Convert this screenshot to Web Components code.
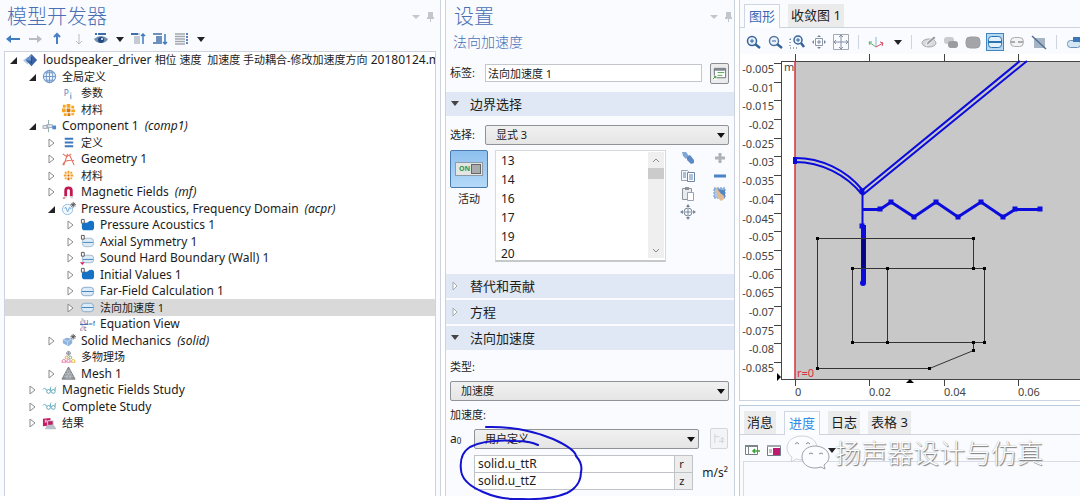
<!DOCTYPE html>
<html lang="zh-CN">
<head>
<meta charset="utf-8">
<title>模型开发器</title>
<style>
  body {
    margin: 0;
    background: #fff;
    color: #1c1c1c;
    font: 12px/16px "Noto Sans", "Noto Sans CJK SC", sans-serif;
    --panel: #f9fbff;
    --edge: #ccd3de;
    --title: #4a6fb5;
  }
</style>
</head>
<body>
<model-app></model-app>

<script>
// 16x16 icon drawings, keyed by name
const ICONS = {
  back: '<path d="M1 8l5-4v3h9v2H6v3z" fill="#3f7cc0"/>',
  forward: '<path d="M15 8l-5-4v3H2v2h8v3z" fill="#b9bcc2"/>',
  up: '<path d="M8 3v10M5 6l3-3 3 3" fill="none" stroke="#4a7fc4" stroke-width="2"/>',
  down: '<path d="M8 3v10M5 10l3 3 3-3" fill="none" stroke="#b9bcc2"/>',
  eye: '<path d="M2 3h2m1 0h8" stroke="#3b6ea8" stroke-width="2"/><path d="M1 8q7-6 14 0-2 4-7 4T1 8z" fill="#6e8db2"/><circle cx="8" cy="9" r="3" fill="#23497c"/><circle cx="9" cy="8" r="1" fill="#fff"/>',
  collapse: '<path d="M1 3h9M4 6h6M4 8h6M4 10h6M4 12h6" stroke="#8d99aa"/><path d="M1 3h7" stroke="#3f6ea8" stroke-width="2"/><path d="M13 13V3M11 5l2-2 2 2" fill="none" stroke="#3f7cc0" stroke-width="1.5"/>',
  expand: '<path d="M1 3h9M4 6h6M4 8h6M4 10h6M1 12h9" stroke="#3f6ea8" stroke-width="1.5"/><path d="M13 3v10M11 11l2 2 2-2" fill="none" stroke="#3f7cc0" stroke-width="1.5"/>',
  columns: '<path d="M1 3h10M1 5.500h10M1 8h10M1 10.500h10M1 13h10" stroke="#a3a8b0" stroke-width="1.500"/><path d="M13 2v12" stroke="#5b84bb" stroke-width="2" stroke-dasharray="2 1"/>',
  root: '<path d="M0 8l5-4 3 4-3 4z" fill="#a8c4e6"/><path d="M9 1l6 6.500L9 14 3 7.500z" fill="#3b62a5"/><path d="M9 1L3 7.500l6 1z" fill="#6d94cd"/><path d="M9 4v7" stroke="#244a89"/>',
  globe: '<circle cx="8" cy="8" r="6.500" fill="#eaf2fc" stroke="#5681bb"/><path d="M8 1.500v13M1.500 8h13M3 4h10M3 12h10" stroke="#6e96ca" fill="none"/><ellipse cx="8" cy="8" rx="3.500" ry="6.500" fill="none" stroke="#6e96ca"/>',
  param: '<text x="3" y="11" font-size="9" fill="#5283c2" font-family="Noto Sans">P</text><path d="M10.500 9v5M10.500 7v1" stroke="#5283c2"/>',
  material: '<g fill="#f5a623"><path d="M6 2h4v4H6zM2 3h3v3H2zM1 7h4v4H1zM11 4h3v3h-3zM11 8h4v3h-4zM3 12h3v3H3zM11 12h3v2h-3z"/></g><path d="M6 7h4v4H6zM7 12h3v3H7z" fill="#d9780f"/>',
  materialSmall: '<g fill="#f2a02a"><path d="M7 3h2v3H7zM4 4h2v2H4zM3 7h3v2H3zM10 4h2v2h-2zM10 7h3v2h-3zM4 10h2v2H4zM10 10h2v2h-2z"/></g><path d="M7 7h2v2H7zM7 10h2v3H7z" fill="#d9620f"/>',
  component: '<path d="M7 1v13" stroke="#8aa" /><path d="M1 7h5v3H1zM5 6h6v3H5z" fill="#e4eaf0" stroke="#a0acba"/><path d="M11 7h4v4h-4z" fill="#4f88cc"/>',
  lines: '<path d="M4 4h9M4 8h9M4 12h9" stroke="#3d78bd" stroke-width="2"/>',
  geometry: '<path d="M2 2l4 3 5-3M7 2L3 14M9 3l5 11M2 14q1-6 12-5" fill="none" stroke="#e4705f" stroke-width="1.200"/>',
  magnet: '<path d="M5 12V6q0-3 3-3t3 3v6" fill="none" stroke="#c2184f" stroke-width="3"/><path d="M3 12h3v2H3zM10 12h3v2h-3z" fill="#cfd4da"/><path d="M2 14h2" stroke="#c22"/>',
  acoustics: '<circle cx="7" cy="9" r="5.500" fill="#f2f8fe" stroke="#93bce0"/><path d="M4 8q1-3 2 1t2 1 1-3 2 1" fill="none" stroke="#5e9bd0"/><path d="M13 1v6M10 4h6M11 2l4 4M15 2l-4 4" stroke="#555"/>',
  domain: '<path d="M2 7q0-2 2-2h3q1 0 2 -1 1-1 3-1 3 0 3 3v4q0 3-3 3H5q-3 0-3-3z" fill="#1672c4"/><path d="M1.500 1.500h3v4h-3z" fill="#fff" stroke="#555"/>',
  symmetry: '<rect x="2.500" y="4.500" width="12" height="9" rx="3.500" fill="#dcebf5" stroke="#a2b9ca"/><path d="M3 9h11" stroke="#4285bd"/><path d="M1.500 1.500h3v4h-3z" fill="#fff" stroke="#555"/>',
  wall: '<rect x="2.500" y="4.500" width="12" height="8" rx="3" fill="#dcebf5" stroke="#a2b9ca"/><path d="M3 9h11" stroke="#4285bd"/><path d="M1.500 1.500h3v4h-3z" fill="#fff" stroke="#555"/><path d="M0 12h5l-2.500 3z" fill="#d81e5b"/>',
  boundary: '<rect x="1.500" y="3.500" width="13" height="9" rx="3.500" fill="#dcebf8" stroke="#86a7c3"/><path d="M2 8h12" stroke="#3d80bd"/>',
  equation: '<g fill="#4068a8" font-size="8" font-family="Noto Sans"><text x="0" y="7">∂u</text><text x="0" y="15">∂t</text><text x="9" y="10">=f</text></g><path d="M0 8h9" stroke="#4068a8"/>',
  solid: '<path d="M2 7l4-2 6 1v5l-4 3-4-2-2-1z" fill="#8eb3dd"/><path d="M2 7l5 2 5-3M7 9v4" fill="none" stroke="#c9dcf2"/><path d="M13 1v6M10 4h6M11 2l4 4M15 2l-4 4" stroke="#555"/>',
  multi: '<circle cx="8" cy="3.500" r="2" fill="none" stroke="#8e959e"/><path d="M8 1v5M5.500 3.500h5" stroke="#8e959e"/><circle cx="6" cy="8" r="1.500" fill="none" stroke="#e59646"/><circle cx="10" cy="8" r="1.500" fill="none" stroke="#68b36d"/><path d="M1 13q0-3 2-3t2 3zM6 13q0-3 2-3t2 3z" fill="none" stroke="#e576a8"/><path d="M11 13q0-3 2-3t2 3z" fill="none" stroke="#e3b928"/>',
  mesh: '<path d="M8 1l7 13H1z" fill="#93999f" stroke="#777d84"/><path d="M6 5h4M4.500 8h7M3 11h10M6 5l5 9M10 5l-5 9M4.500 8l3 6M11.500 8l-3 6" stroke="#c4c8cc" stroke-width=".600"/>',
  study: '<path d="M1 7q2-3 4 1" fill="none" stroke="#59a5b5"/><circle cx="7" cy="9" r="2" fill="none" stroke="#59a5b5"/><circle cx="12" cy="9" r="2" fill="none" stroke="#59a5b5"/><path d="M9 8V5l1-1M14 8V5l1-1" stroke="#59a5b5" fill="none"/>',
  results: '<path d="M1 3l8-1v8l-8 1z" fill="#c41e67"/><path d="M3 4h2v3H3z" fill="#f2bfd4"/><path d="M6 5h6v5H6z" fill="#b52563" stroke="#e2dfe4"/><path d="M5 10l7-1 3 4v1H3z" fill="#b9c0ca"/>',
  report: '<path d="M2.500 2.500h12v10h-12z" fill="#fff" stroke="#666e77"/><path d="M2 3h13v2H2z" fill="#7b8590"/><path d="M6 7h7M6 10h5" stroke="#4da34a"/><path d="M0 10h5v5H0z" fill="#f4f8f1"/><path d="M1 14l3-3M2 11h2v2" stroke="#34913a" fill="none"/>',
  brush: '<path d="M2 2h4l3 4-3 3-3-3z" fill="#7fa7d8"/><path d="M7 7l3-2 4 5v3l-3 1-4-4z" fill="#5c8ac4"/>',
  copy: '<path d="M1.500 2.500h6l1 1v9h-7z" fill="#f5f8fc" stroke="#98a2b2"/><path d="M7.500 4.500h7v9h-7z" fill="#fff" stroke="#6d87ab"/><path d="M3 5h3M3 7h3M3 9h3M9 7h4M9 9h4M9 11h4" stroke="#5b83bd"/>',
  paste: '<path d="M2.500 2.500h9v11h-9z" fill="#e9ecef" stroke="#8c939c"/><path d="M5 1h4v3H5z" fill="#8c939c"/><path d="M7.500 6.500h6v8h-6z" fill="#fff" stroke="#98a2b2"/>',
  zoomsel: '<circle cx="8" cy="8" r="4" fill="none" stroke="#7a8797"/><path d="M8 5v6M5 8h6" stroke="#7a8797"/><path d="M8 0l2 3H6zM8 16l2-3H6zM0 8l3-2v4zM16 8l-3-2v4z" fill="#76859a"/>',
  plus: '<path d="M8 3v10M3 8h10" stroke="#aeb3ba" stroke-width="3"/>',
  minus: '<path d="M2 8h12" stroke="#4a82c2" stroke-width="3"/>',
  clear: '<path d="M2 2h11v10H2z" fill="#a9c7eb" stroke="#6993c9" stroke-dasharray="2 1"/><path d="M4 3l9 1v8" fill="#5486c2"/><path d="M4 1l5 7q4 1 3 5l-3 2-4-4z" fill="#e2bb92"/>',
  zoomin: '<circle cx="7" cy="7" r="4.500" fill="#eaf3fd" stroke="#34639b" stroke-width="1.500"/><path d="M10 10l5 4" stroke="#34639b" stroke-width="2.500"/><path d="M7 5v4M5 7h4" stroke="#34639b"/>',
  zoomout: '<circle cx="7" cy="7" r="4.500" fill="#eaf3fd" stroke="#55779f" stroke-width="1.500"/><path d="M10 10l5 4" stroke="#34639b" stroke-width="2.500"/><path d="M5 7h4" stroke="#34639b"/>',
  zoombox: '<path d="M1 5v9h7M1 5h3" fill="none" stroke="#4d6584" stroke-dasharray="1 2"/><circle cx="9" cy="6" r="4" fill="#eaf3fd" stroke="#34639b" stroke-width="1.500"/><path d="M12 9l3 4" stroke="#34639b" stroke-width="2.500"/><path d="M9 4v4M7 6h4" stroke="#34639b"/>',
  extents: '<path d="M4.500 4.500h7v7h-7z" fill="none" stroke="#8c97a5"/><path d="M8 6v4M6 8h4" stroke="#7a8797"/><path d="M8 1l2 2H6zM8 15l2-2H6zM1 8l2-2v4zM15 8l-2-2v4z" fill="#76859a"/>',
  fit: '<path d="M.500 .500h15v15H.500z" fill="none" stroke="#a3a9b1"/><path d="M8 1v14M1 8h14M6 3l2-2 2 2M6 13l2 2 2-2M3 6L1 8l2 2M13 6l2 2-2 2" fill="none" stroke="#8390a2"/>',
  axes: '<path d="M8 13V3" stroke="#8fb0e0"/><path d="M8 13L1 8M2 11L1 8l3 0" fill="none" stroke="#5cb36e"/><path d="M8 13l7-4M12 8l3 1-1 3" fill="none" stroke="#d8505f"/>',
  edit: '<ellipse cx="8" cy="9" rx="7" ry="4" fill="#d8dadc" stroke="#a6a9ac"/><path d="M5 12l1-4 7-6 2 2-7 6z" fill="#9b9ea1" stroke="#f2f2f2"/>',
  shapes: '<rect x="1" y="3" width="10" height="7" rx="3" fill="#c9cbcd"/><rect x="5" y="7" width="10" height="7" rx="3" fill="#9a9da0"/>',
  blob: '<rect x="1" y="3" width="14" height="11" rx="4" fill="#a3a5a8" stroke="#9c9fa2"/>',
  edges: '<rect x="1.500" y="2.500" width="13" height="11" rx="3" fill="#e5f1fa" stroke="#2773b4"/><path d="M1 8h14" stroke="#2773b4" stroke-width="2"/>',
  points: '<rect x="1.500" y="3.500" width="13" height="9" rx="4" fill="#f3f3f4" stroke="#aaadb0"/><path d="M1 8h14" stroke="#aaadb0" stroke-width="2" stroke-dasharray="5 3"/>',
  nosel: '<path d="M3 4h11v10H3z" fill="#a6b4c6"/><path d="M1 2l14 13" stroke="#546f92" stroke-width="1.500"/>',
  view: '<rect x="1.500" y="6.500" width="13" height="7" rx="3" fill="#d4e5f4" stroke="#6e93b8"/><path d="M7 8V3h8v5" fill="#3a78b8"/>',
  export: '<path d="M1.500 3.500h12v9h-12z" fill="#fff" stroke="#737a82"/><path d="M1 3h13v2H1zM4 4h1v9H4z" fill="#7c848c"/><path d="M16 9h-7M11 7L9 9l2 2" fill="none" stroke="#3fa23d" stroke-width="1.500"/>',
  stop: '<path d="M1.500 3.500h13v10h-13z" fill="#fff" stroke="#737a82"/><path d="M1 3h14v2H1z" fill="#a2a8af"/><path d="M7 6h7v7H7z" fill="#c01770"/><path d="M3 8h3M3 10h3" stroke="#888"/>',
  table: '<path d="M3 3v10M3 6h5M11 13V7M9 9l2-2 2 2M7 11h6" fill="none" stroke="#cfd2d6"/>',
  caret: '<path d="M4 6h8l-4 5z" fill="#222"/>',
  menu: '<path d="M4 7h8l-4 4z" fill="#c3c6cc"/>',
  pin: '<path d="M6 4h5v5h1v2H9v3H8v-3H5V9h1z" fill="#c3c6cc"/>'
};

class UiIcon extends HTMLElement {
  connectedCallback() {
    this.attachShadow({ mode: 'open' }).innerHTML = `
      <style>
        :host { display: block; flex: none; width: 16px; height: 16px; }
        svg { display: block; width: 100%; height: 100%; }
      </style>
      <svg viewBox="0 0 16 16" aria-hidden="true">${ICONS[this.getAttribute('name')] || ''}</svg>
    `;
  }
}

class ToolButton extends HTMLElement {
  connectedCallback() {
    this.attachShadow({ mode: 'open' }).innerHTML = `
      <style>
        :host { display: block; flex: none; }
        button { display: block; padding: 0; border: 0; background: none; }
        :host([caret]) button { width: 12px; overflow: hidden; }
        :host([active]) button {
          outline: 1px solid #4386bf;
          background: #b7d8f3;
        }
      </style>
      <button type="button" aria-label="${this.getAttribute('icon')}">
        <ui-icon name="${this.getAttribute('icon')}"></ui-icon>
      </button>
    `;
  }
}

class PanelTitle extends HTMLElement {
  connectedCallback() {
    this.attachShadow({ mode: 'open' }).innerHTML = `
      <style>
        :host { display: flex; align-items: center; height: 30px; }
        h1 {
          flex: 1;
          margin: 0;
          font: 300 20px/30px "Noto Sans CJK SC", sans-serif;
          color: var(--title);
        }
        tool-button { margin-right: -2px; }
      </style>
      <h1><slot></slot></h1>
      <tool-button icon="menu"></tool-button>
      <tool-button icon="pin"></tool-button>
    `;
  }
}

class TreeRow extends HTMLElement {
  connectedCallback() {
    const level = Number(this.getAttribute('level'));
    const state = this.getAttribute('state');
    const arrows = {
      open: '<path d="M9 2v7H2z" fill="#222"/>',
      closed: '<path d="M3 1l5 4-5 4z" fill="#fff" stroke="#8a8a8a"/>'
    };
    this.attachShadow({ mode: 'open' }).innerHTML = `
      <style>
        :host {
          display: flex;
          align-items: center;
          height: 16px;
          padding-left: ${3 + level * 19}px;
        }
        :host(:nth-child(even)) { height: 17px; }
        :host([selected]) { background: #d9d9d9; }
        svg { flex: none; width: 10px; height: 10px; margin-right: 5px; }
        ui-icon { width: 15px; height: 15px; margin-right: 5px; }
        span { white-space: pre; }
        ::slotted(b) { font-weight: 400; font-size: 11px; }
        ::slotted(i) { margin-left: 6px; }
      </style>
      <svg viewBox="0 0 10 10" aria-hidden="true">${arrows[state] || ''}</svg>
      <ui-icon name="${this.getAttribute('icon')}"></ui-icon>
      <span><slot></slot></span>
    `;
  }
}

class ModelBuilder extends HTMLElement {
  connectedCallback() {
    this.attachShadow({ mode: 'open' }).innerHTML = `
      <style>
        :host {
          display: flex;
          flex-direction: column;
          padding: 1px 4px 0 4px;
          background: var(--panel);
          border-right: 1px solid var(--edge);
        }
        panel-title { padding-left: 3px; }
        .bar { display: flex; gap: 6px; height: 20px; padding: 0 1px; }
        .bar .pair { display: flex; gap: 3px; }
        .tree {
          flex: 1;
          border: 1px solid var(--edge);
          border-bottom: 0;
          background: #fff;
          overflow: hidden;
        }
      </style>
      <panel-title>模型开发器</panel-title>
      <div class="bar">
        <tool-button icon="back"></tool-button>
        <tool-button icon="forward"></tool-button>
        <tool-button icon="up"></tool-button>
        <tool-button icon="down"></tool-button>
        <span class="pair"><tool-button icon="eye"></tool-button><tool-button caret icon="caret"></tool-button></span>
        <tool-button icon="collapse"></tool-button>
        <tool-button icon="expand"></tool-button>
        <span class="pair"><tool-button icon="columns"></tool-button><tool-button caret icon="caret"></tool-button></span>
      </div>
      <div class="tree">
        <tree-row level="0" state="open" icon="root">loudspeaker_driver <b>相位 速度  加速度 手动耦合-修改加速度方向</b> 20180124.mph</tree-row>
        <tree-row level="1" state="open" icon="globe"><b>全局定义</b></tree-row>
        <tree-row level="2" icon="param"><b>参数</b></tree-row>
        <tree-row level="2" icon="material"><b>材料</b></tree-row>
        <tree-row level="1" state="open" icon="component">Component 1<i>(comp1)</i></tree-row>
        <tree-row level="2" state="closed" icon="lines"><b>定义</b></tree-row>
        <tree-row level="2" state="closed" icon="geometry">Geometry 1</tree-row>
        <tree-row level="2" state="closed" icon="materialSmall"><b>材料</b></tree-row>
        <tree-row level="2" state="closed" icon="magnet">Magnetic Fields<i>(mf)</i></tree-row>
        <tree-row level="2" state="open" icon="acoustics">Pressure Acoustics, Frequency Domain<i>(acpr)</i></tree-row>
        <tree-row level="3" state="closed" icon="domain">Pressure Acoustics 1</tree-row>
        <tree-row level="3" state="closed" icon="symmetry">Axial Symmetry 1</tree-row>
        <tree-row level="3" state="closed" icon="wall">Sound Hard Boundary (Wall) 1</tree-row>
        <tree-row level="3" state="closed" icon="domain">Initial Values 1</tree-row>
        <tree-row level="3" state="closed" icon="boundary">Far-Field Calculation 1</tree-row>
        <tree-row level="3" state="closed" icon="boundary" selected><b>法向加速度 1</b></tree-row>
        <tree-row level="3" icon="equation">Equation View</tree-row>
        <tree-row level="2" state="closed" icon="solid">Solid Mechanics<i>(solid)</i></tree-row>
        <tree-row level="2" icon="multi"><b>多物理场</b></tree-row>
        <tree-row level="2" state="closed" icon="mesh">Mesh 1</tree-row>
        <tree-row level="1" state="closed" icon="study">Magnetic Fields Study</tree-row>
        <tree-row level="1" state="closed" icon="study">Complete Study</tree-row>
        <tree-row level="1" state="closed" icon="results"><b>结果</b></tree-row>
      </div>
    `;
  }
}

class FormSection extends HTMLElement {
  connectedCallback() {
    const open = this.hasAttribute('open');
    this.attachShadow({ mode: 'open' }).innerHTML = `
      <style>
        :host { display: block; }
        :host(:not(:last-of-type)) { margin-bottom: 2px; }
        h2 {
          display: flex;
          align-items: center;
          height: 24px;
          margin: 0;
          padding-left: 4px;
          background: #dfe8f4;
          font: 400 13px/24px "Noto Sans CJK SC", sans-serif;
        }
        svg { width: 10px; height: 10px; margin-right: 10px; }
      </style>
      <h2>
        <svg viewBox="0 0 10 10" aria-hidden="true">${open
          ? '<path d="M1 2h8L5 7z" fill="#444"/>'
          : '<path d="M3 1l4 4-4 4z" fill="#fff" stroke="#a5abb3"/>'}</svg>
        ${this.getAttribute('heading')}
      </h2>
      <slot></slot>
    `;
  }
}

class SettingsPanel extends HTMLElement {
  connectedCallback() {
    this.attachShadow({ mode: 'open' }).innerHTML = `
      <style>
        :host {
          display: block;
          position: relative;
          margin-left: 4px;
          padding-top: 1px;
          background: var(--panel);
          border: solid var(--edge);
          border-width: 0 1px;
          font-size: 11px;
        }
        panel-title { padding-left: 8px; }
        .sub {
          height: 31px;
          padding-left: 7px;
          font: 300 14px/20px "Noto Sans CJK SC", sans-serif;
          color: var(--title);
        }
        .row { display: flex; align-items: center; gap: 8px; padding: 0 5px 0 4px; }
        .name { height: 22px; padding-bottom: 8px; }
        .name > input { flex: 1; min-width: 0; height: 18px; }
        .name label, .pick label { width: 27px; }
        label { white-space: nowrap; }
        input {
          box-sizing: border-box;
          margin: 0;
          padding: 0 2px;
          border: 1px solid #c3c6cb;
          background: #fff;
          color: inherit;
          font: inherit;
        }
        select {
          appearance: none;
          box-sizing: border-box;
          flex: 1;
          min-width: 0;
          height: 20px;
          margin: 0;
          padding: 0 10px;
          border: 1px solid #8f9298;
          border-radius: 2px;
          background: linear-gradient(#f1f1f2, #e5e5e6);
          color: inherit;
          font: inherit;
        }
        .drop { display: flex; flex: 1; min-width: 0; position: relative; }
        .drop::after {
          content: "";
          position: absolute;
          right: 4px;
          top: 8px;
          border: solid transparent;
          border-width: 5px 4px 0;
          border-top-color: #111;
        }
        .sq {
          box-sizing: border-box;
          width: 19px;
          height: 21px;
          padding: 1px;
          border: 1px solid #8a8d92;
          border-radius: 2px;
          background: #ececed;
        }
        .sq ui-icon { width: 15px; height: 15px; }
        .sq[disabled] { border-color: #d3d6db; background: #f3f4f7; }
        .pick { padding-top: 9px; }
        .body { display: flex; align-items: flex-start; padding: 5px 6px 10px 4px; }
        .onoff { width: 38px; text-align: center; line-height: 22px; }
        .onoff button {
          display: grid;
          place-items: center;
          box-sizing: border-box;
          width: 38px;
          height: 38px;
          padding: 0;
          border: 1px solid #4a7aad;
          border-radius: 2px;
          background: linear-gradient(#8dc0ee, #b5d9f8);
        }
        .switch {
          display: flex;
          align-items: center;
          justify-content: space-between;
          box-sizing: border-box;
          width: 28px;
          height: 14px;
          padding: 1px 1px 1px 3px;
          border: 1px solid #8d99a5;
          background: #e4e6e4;
          color: #2c9a4e;
          font: bold 7px/10px "Noto Sans", sans-serif;
        }
        .switch::after {
          content: "";
          box-sizing: border-box;
          width: 10px;
          height: 10px;
          border: 1px solid #666;
          background: #a9abad;
        }
        .list {
          display: flex;
          flex: 1;
          box-sizing: border-box;
          height: 112px;
          margin: 0 14px 0 7px;
          border: 1px solid #d5d8dd;
          border-bottom: 2px solid #c5c9c8;
          background: #fff;
          overflow: hidden;
        }
        ul { flex: 1; height: 109px; margin: 0; padding: 0 5px; list-style: none; font-size: 12px; line-height: 19px; }
        li:last-child { line-height: 14px; height: 14px; padding-top: 1px; }
        .scroll {
          display: flex;
          flex-direction: column;
          align-items: center;
          width: 16px;
          margin: 1px 1px 2px;
          background: #efefef;
        }
        .scroll svg { width: 8px; height: 16px; }
        .thumb { width: 100%; height: 11px; margin-bottom: auto; background: #cbcbcb; }
        .tools { display: grid; grid-template-columns: 16px 16px; gap: 2px 16px; }
        .tools > :last-child { grid-column: 1; }
        .cap { display: block; padding-left: 4px; line-height: 16px; }
        .type { padding-top: 9px; padding-bottom: 6px; }
        .acc { padding-top: 6px; padding-bottom: 5px; }
        .a0 { width: 17px; font-size: 12px; }
        .a0 sub { font-size: 8px; line-height: 0; vertical-align: -1px; }
        .user { padding-right: 6px; gap: 7px; }
        .user .sq { width: 18px; margin-left: 4px; }
        .vec { gap: 9px; padding: 6px 6px 5px 28px; }
        .vec > span { font-size: 12px; }
        table { flex: 1; border-collapse: collapse; border: 1px solid #bfc2c7; background: #fff; font-size: 12px; }
        td, th { padding: 0; border: 1px solid #bfc2c7; height: 16px; font-weight: 400; }
        th { width: 18px; padding-left: 4px; background: #ededee; text-align: left; font-size: 11px; line-height: 12px; box-sizing: border-box; }
        td { padding-left: 1px; }
        td input { display: block; width: 100%; height: 16px; border: 0; }
        /* pen mark round the two vector components */
        .pen {
          position: absolute;
          left: 10px;
          bottom: -4px;
          width: 132px;
          height: 78px;
          pointer-events: none;
        }
      </style>
      <panel-title>设置</panel-title>
      <div class="sub">法向加速度</div>
      <div class="row name">
        <label for="name">标签:</label>
        <input id="name" value="法向加速度 1">
        <button class="sq" type="button" aria-label="report"><ui-icon name="report"></ui-icon></button>
      </div>
      <form-section heading="边界选择" open>
        <div class="row pick">
          <label for="sel">选择:</label>
          <span class="drop"><select id="sel"><option>显式 3</option></select></span>
        </div>
        <div class="body">
          <div class="onoff">
            <button type="button" aria-labelledby="act"><span class="switch">ON</span></button>
            <span id="act">活动</span>
          </div>
          <div class="list">
            <ul><li>13</li><li>14</li><li>16</li><li>17</li><li>19</li><li>20</li></ul>
            <div class="scroll">
              <svg viewBox="0 0 8 16"><path d="M1 10l3-3 3 3" fill="none" stroke="#888"/></svg>
              <div class="thumb"></div>
              <svg viewBox="0 0 8 16"><path d="M1 7l3 3 3-3" fill="none" stroke="#888"/></svg>
            </div>
          </div>
          <div class="tools">
            <tool-button icon="brush"></tool-button><tool-button icon="plus"></tool-button>
            <tool-button icon="copy"></tool-button><tool-button icon="minus"></tool-button>
            <tool-button icon="paste"></tool-button><tool-button icon="clear"></tool-button>
            <tool-button icon="zoomsel"></tool-button>
          </div>
        </div>
      </form-section>
      <form-section heading="替代和贡献"></form-section>
      <form-section heading="方程"></form-section>
      <form-section heading="法向加速度" open>
        <label class="cap type" for="type">类型:</label>
        <div class="row"><span class="drop"><select id="type"><option>加速度</option></select></span></div>
        <label class="cap acc" for="acc">加速度:</label>
        <div class="row user">
          <span class="a0">a<sub>0</sub></span>
          <span class="drop"><select id="acc"><option>用户定义</option></select></span>
          <button class="sq" type="button" disabled aria-label="table"><ui-icon name="table"></ui-icon></button>
        </div>
        <div class="row vec">
          <table>
            <tr><td><input id="r" value="solid.u_ttR"></td><th><label for="r">r</label></th></tr>
            <tr><td><input id="z" value="solid.u_ttZ"></td><th><label for="z">z</label></th></tr>
          </table>
          <span>m/s²</span>
        </div>
      </form-section>
      <svg class="pen" viewBox="0 0 132 78" aria-hidden="true">
        <path d="M30 5C60 4 80 10 97 17Q119 27 120 34Q127 42 125 50Q125 64 111 71Q95 78 66 77Q45 78 27 70Q6 61 5 48Q3 32 14 25Q30 17 60 19Q74 19 82 23" fill="none" stroke="#1212cf" stroke-width="2" stroke-linecap="round"/>
      </svg>
    `;
  }
}

class TabButton extends HTMLElement {
  connectedCallback() {
    this.attachShadow({ mode: 'open' }).innerHTML = `
      <style>
        :host { display: block; }
        button {
          display: block;
          height: 23px;
          padding: 0 3px;
          border: 0;
          background: #ebebec;
          color: #1c1c1c;
          font: 13px/23px "Noto Sans", "Noto Sans CJK SC", sans-serif;
        }
        :host([active]) { margin-bottom: -1px; }
        :host([active]) button {
          height: 24px;
          padding: 0 4px;
          border: 1px solid #cdd6e2;
          border-bottom: 0;
          background: #fcfdff;
          color: var(--tab-color, #3e68b3);
        }
      </style>
      <button type="button"><slot></slot></button>
    `;
  }
}

// Axisymmetric geometry plot; the r axis starts 55px from the left edge
class GeometryPlot extends HTMLElement {
  connectedCallback() {
    const x0 = 55, top = 7, bottom = 325, left = 41;
    let ticks = '', labels = '';
    for (let i = 0; i < 17; i++) {
      const y = Math.round(9 + i * 18.69);
      ticks += `M${left - 7} ${y}.5h7`;
      const value = -(i + 1) * 5 / 1000;
      labels += `<text x="34" y="${y + 10}" text-anchor="end">${value}</text>`;
    }
    ['0', '0.02', '0.04', '0.06'].forEach((value, i) => {
      const x = Math.round(x0 + i * 74.3);
      ticks += `M${x}.5 0v${top}M${x}.5 ${bottom}v7`;
      labels += `<text x="${x}" y="342">${value}</text>`;
    });
    const dots = [[77, 184], [233, 184], [112, 214], [147, 214], [233, 214], [244, 214],
      [112, 288], [147, 288], [233, 288], [244, 288], [233, 296], [77, 314], [189, 314]];
    const knots = [[140, 155], [151, 148], [174, 163], [196, 148], [218, 163], [241, 148], [263, 163], [275, 155], [300, 155], [122, 137], [122, 172]];
    const square = (size) => ([x, y]) => `M${x - size / 2} ${y - size / 2}h${size}v${size}h-${size}z`;

    this.attachShadow({ mode: 'open' }).innerHTML = `
      <style>
        :host { display: block; background: #fff; border-bottom: 1px solid var(--edge); }
        svg { display: block; width: 100%; height: 346px; font-size: 11px; fill: #444; }
      </style>
      <svg role="img" aria-label="geometry">
        <rect x="${x0}" y="${top}" width="100%" height="${bottom - top}" fill="#c8c8c8"/>
        <path d="M${left}.5 ${top}V${bottom}M${left} ${top}.5H4000M${left} ${bottom}.5H4000${ticks}" stroke="#444" fill="none"/>
        <path d="M${x0} ${top}V${bottom}" stroke="#d6323c" stroke-width="1.500"/>
        ${labels}
        <text x="44" y="17">m</text>
        <text x="57" y="323" fill="#e0303c">r=0</text>
        <path d="M37 319l4 4-4 4zM166 329l4-4 4 4z" fill="#000"/>
        <g fill="none" stroke="#0b0bdc" stroke-width="2">
          <path d="M55 104A87 87 0 0 1 122.500 136L280 7M55 108A87 87 0 0 1 122.500 141L287 7M122.500 136v36"/>
          <path d="M123.500 171v57" stroke-width="5"/>
          <path d="M123.500 184v30" stroke="#050585" stroke-width="4"/>
          <path d="M122 155.500H140L151 148L174 163L196 148L218 163L241 148L263 163L275 155.500H300" stroke-width="3"/>
        </g>
        <circle cx="123" cy="229" r="3" fill="#0b0bdc"/>
        <path d="${knots.map(square(5)).join('')}M53 103h4v7h-4z" fill="#0b0bdc"/>
        <path d="M233.500 214.500V184.500H77.500V314.500H189.500L233.500 296.500V288.500M112.500 214.500H244.500V288.500H112.500zM147.500 214.500v74" fill="none" stroke="#333"/>
        <path d="${dots.map(([x, y]) => square(3)([x + .5, y + .5])).join('')}" fill="#000"/>
      </svg>
    `;
  }
}

class GraphicsPanel extends HTMLElement {
  connectedCallback() {
    const tool = (name) => `<tool-button icon="${name}"></tool-button>`;
    this.attachShadow({ mode: 'open' }).innerHTML = `
      <style>
        :host {
          display: block;
          min-width: 0;
          margin-left: 4px;
          padding-top: 4px;
          background: var(--panel);
          border-left: 1px solid var(--edge);
        }
        .tabs { display: flex; gap: 8px; padding-left: 4px; border-bottom: 1px solid var(--edge); }
        .bar { display: flex; align-items: center; gap: 6px; height: 26px; padding-left: 5px; padding-top: 1px; box-sizing: border-box; overflow: hidden; }
        .bar i { flex: none; width: 1px; height: 14px; margin: 0 3px; background: #cfd5de; }
      </style>
      <div class="tabs">
        <tab-button active>图形</tab-button>
        <tab-button>收敛图 1</tab-button>
      </div>
      <div class="bar">
        ${['zoomin', 'zoomout', 'zoombox', 'extents', 'fit'].map(tool).join('')}
        <i></i>${tool('axes')}<tool-button caret icon="caret"></tool-button><i></i>
        ${['edit', 'shapes', 'blob'].map(tool).join('')}
        <tool-button active icon="edges"></tool-button>
        ${['points', 'nosel'].map(tool).join('')}
        <i></i>${tool('view')}
      </div>
      <geometry-plot></geometry-plot>
    `;
  }
}

class MessagePanel extends HTMLElement {
  connectedCallback() {
    this.attachShadow({ mode: 'open' }).innerHTML = `
      <style>
        :host {
          display: flex;
          flex-direction: column;
          position: relative;
          min-width: 0;
          margin: 4px 0 0 4px;
          padding-top: 5px;
          background: var(--panel);
          border: solid #b9cde2;
          border-width: 1px 0 0 1px;
          --tab-color: #2f8be6;
        }
        .tabs { display: flex; gap: 8px; padding-left: 4px; border-bottom: 1px solid var(--edge); }
        .bar { display: flex; gap: 6px; height: 26px; padding: 7px 4px 0; box-sizing: border-box; }
        .bar [caret] { margin-left: 36px; }
        .log { flex: 1; margin-left: 3px; border: solid #d5dce7; border-width: 1px 0 0 1px; }
        .mark {
          display: flex;
          align-items: center;
          gap: 5px;
          position: absolute;
          left: 46px;
          top: 28px;
          color: #fff;
          font: 300 26px/36px "Noto Sans CJK SC", sans-serif;
          white-space: nowrap;
          text-shadow: 1px 1px 1px #777, 0 0 1px #999;
        }
        .mark svg { width: 44px; height: 36px; }
      </style>
      <div class="tabs">
        <tab-button>消息</tab-button>
        <tab-button active>进度</tab-button>
        <tab-button>日志</tab-button>
        <tab-button>表格 3</tab-button>
      </div>
      <div class="bar">
        <tool-button icon="export"></tool-button>
        <tool-button icon="stop"></tool-button>
        <tool-button caret icon="caret"></tool-button>
      </div>
      <div class="log"></div>
      <div class="mark">
        <svg viewBox="0 0 44 36" aria-hidden="true">
          <g fill="#fbfcff" stroke="#b0b4ba">
            <path d="M16 2C7 2 1 7 1 14c0 4 2 7 5 9l-1 5 5-3q3 1 7 1c8 0 14-5 14-12S25 2 16 2z" stroke="#d0d3d8"/>
            <path d="M29 12c-8 0-13 5-13 11s5 11 13 11q3 0 6-1l4 2-1-4c3-2 5-5 5-8 0-6-6-11-14-11z" stroke="#9da1a8"/>
          </g>
          <g fill="none" stroke="#888"><path d="M9 10q2-3 4 0M20 10q2-3 4 0M23 20q2-2 4 0M33 20q2-2 4 0"/></g>
        </svg>
        扬声器设计与仿真
      </div>
    `;
  }
}

class ModelApp extends HTMLElement {
  connectedCallback() {
    this.attachShadow({ mode: 'open' }).innerHTML = `
      <style>
        :host {
          display: grid;
          grid-template-columns: minmax(0, 441fr) minmax(0, 294fr) minmax(0, 345fr);
          box-sizing: border-box;
          min-height: 100vh;
          padding-bottom: 4px;
          overflow: hidden;
        }
        .right { display: grid; grid-template-rows: auto 1fr; min-width: 0; }
      </style>
      <model-builder></model-builder>
      <settings-panel></settings-panel>
      <div class="right">
        <graphics-panel></graphics-panel>
        <message-panel></message-panel>
      </div>
    `;
  }
}

customElements.define('ui-icon', UiIcon);
customElements.define('tool-button', ToolButton);
customElements.define('panel-title', PanelTitle);
customElements.define('tree-row', TreeRow);
customElements.define('model-builder', ModelBuilder);
customElements.define('form-section', FormSection);
customElements.define('settings-panel', SettingsPanel);
customElements.define('tab-button', TabButton);
customElements.define('geometry-plot', GeometryPlot);
customElements.define('graphics-panel', GraphicsPanel);
customElements.define('message-panel', MessagePanel);
customElements.define('model-app', ModelApp);
</script>
</body>
</html>
